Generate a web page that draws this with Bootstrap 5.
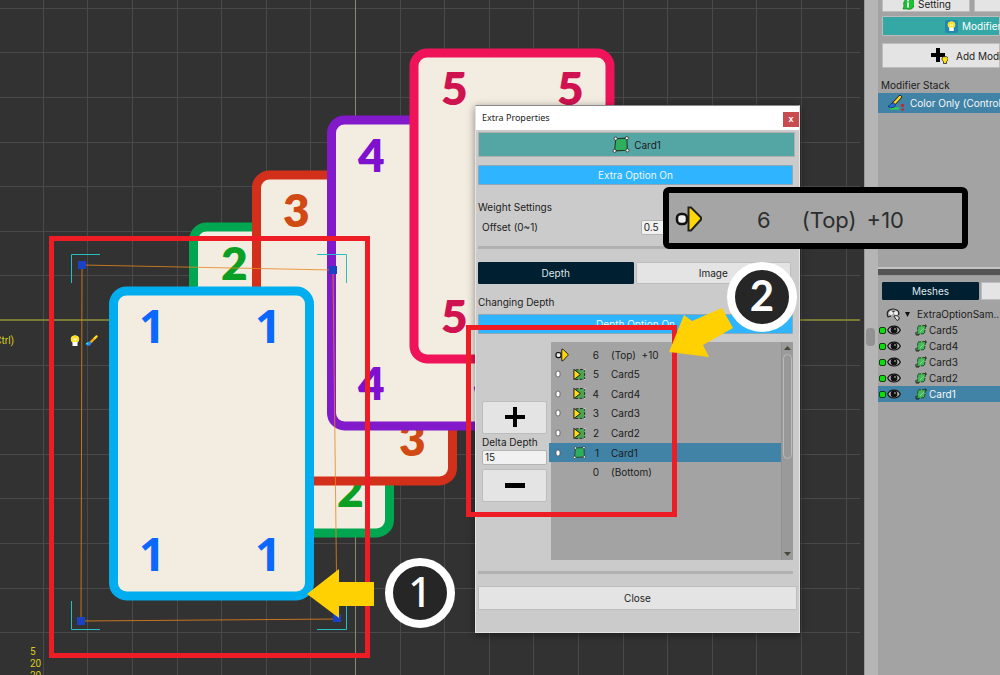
<!DOCTYPE html>
<html lang="en">
<head>
<meta charset="utf-8">
<meta name="viewport" content="width=device-width, initial-scale=1">
<title>Extra Properties</title>
<link href="https://cdn.jsdelivr.net/npm/bootstrap@5.3.0/dist/css/bootstrap.min.css" rel="stylesheet">
<script src="https://cdn.jsdelivr.net/npm/bootstrap@5.3.0/dist/js/bootstrap.bundle.min.js"></script>
<style>
  body { font-family: Inter, "Liberation Sans", sans-serif; font-size: 10px; line-height: 16px; color: #1c1c1c; background: #a3a3a3; }
  .stage { background: #323232; min-width: 0; }
  .stage-art, .notes { display: block; left: 0; top: 0; width: 100%; height: 100%; }
  .digit { font: 800 46px Lato, sans-serif; }
  .digit-one { font: 700 46px "Noto Sans", sans-serif; }
  .hud { font: 10px Roboto, sans-serif; fill: #d6ce1c; }
  .badge-one { font: 500 41px "Noto Sans", sans-serif; }
  .badge-two { font: 700 42px Lato, sans-serif; }

  /* shared controls */
  .ctl { border: 1px solid #bdbdbd; border-radius: 1px; background: #e4e4e4; color: #1c1c1c; font-size: 10px; line-height: 16px; padding: 0; white-space: nowrap; }
  .ctl-on { background: #001f30; color: #dfe6ea; border-color: #001f30; }
  .ctl-blue { background: #2fb4ff; color: #eef8ff; border-color: #8fa8b8; }
  .field { border: 1px solid #b4b4b4; border-radius: 2px; background: #f1f1f1; height: 15px; padding: 0 2px; font-size: 10px; line-height: 13px; color: #1c1c1c; }
  .picked { background: #4183a6; }
  .h20 { height: 20px; }
  .h22 { height: 22px; }

  /* floating window */
  .win { left: 475px; top: 105px; width: 325px; background: #cbcbcb; border: 1px solid #e4e4e4; border-top: 1px solid #8a8a8a; box-shadow: 0 2px 8px rgba(0,0,0,.45); }
  .win-title { height: 24px; background: #fff; font-family: "Noto Sans", sans-serif; font-size: 9px; padding-left: 6px; }
  .win-x { width: 16px; height: 15px; background: #c84b50; color: #fff; border: 0; padding: 0; font: bold 9px/13px "Liberation Sans", sans-serif; margin-top: 2px; }
  .win-head { height: 25px; background: #54a6a5; margin: 2px 4px 0 2px; border: 1px solid #b5b0ae; }
  .win-body { padding: 8px 2px 22px 2px; }
  .heading { margin: 14px 0 4px; }
  .offset-field { width: 49%; }
  .rule { height: 3px; background: #b1b1b1; margin: 11px 4px 0 0; }
  .tabs { gap: 2px; margin-top: 13px; padding-right: 6px; }
  .subheading { margin-top: 10px; }
  .side-col { width: 65px; }
  .big-btn { height: 33px; border-radius: 2px; }
  .layers { height: 218px; background: #a3a3a3; }
  .layer-list { display: grid; grid-template-rows: repeat(7, 1fr); height: 137px; margin: 3px 0 0 -2px; }
  .layer { display: grid; grid-template-columns: 18px 12px 18px auto; align-items: center; padding-left: 6px; }
  .layer:not(.picked) { margin-left: 2px; padding-left: 4px; }
  .track { width: 12px; background: #9a9a9a; border-left: 1px solid #929292; }
  .thumb { width: 9px; height: 105px; border: 1px solid #bababa; border-radius: 5px; background: #989898; }
  .tri { width: 7px; height: 4px; background: #484838; clip-path: polygon(50% 0, 100% 100%, 0 100%); }
  .tri-down { clip-path: polygon(0 0, 100% 0, 50% 100%); }
  .close-btn { height: 24px; margin-top: 12px; }

  /* right dock */
  .gutter { width: 14px; background: #b5b5b5; border-left: 1px solid #999; }
  .grip { width: 9px; height: 18px; border-radius: 4px; background: #929292; margin: 328px 0 0 1px; }
  .dock { width: 122px; background: #a3a3a3; white-space: nowrap; }
  .dock-top { height: 267px; }
  .top-tabs { height: 12px; }
  .top-tab { width: 88px; height: 17px; }
  .mod-head { height: 20px; background: #35a8a6; padding-left: 62px; }
  .add-mod { height: 25px; margin-top: 7px; padding-left: 48px; gap: 8px; }
  .stack-title { margin: 9px 0 0 -1px; }
  .stack-row { margin-left: -4px; padding-left: 9px; gap: 5px; }
  .dock-bar { height: 9px; background: #555; border-top: 2px solid #c4c4c4; border-bottom: 1px solid #999; }
  .mesh-tabs { gap: 2px; margin: 6px 0; }
  .mesh-tab { width: 97px; height: 18px; }
  .tree-row { height: 16px; }
  .caret { margin: 0 7px 0 4px; }
  .dot { width: 7px; height: 7px; background: #0be00b; border: 1px solid #123d12; border-radius: 2px; margin: 0 1px; }
  .tree-icon { margin: 0 2px 0 14px; }

  .zoom-note { left: 663px; top: 187px; width: 305px; height: 62px; border: 6px solid #000; border-radius: 6px; background: #a5a5a5; font-size: 22px; line-height: 26px; padding: 4px 0 0 6px; color: #2d2d2d; gap: 10px; }
  .zoom-note svg { margin-bottom: 3px; }
  .zoom-num { margin: 0 21px 0 44px; }
</style>
</head>
<body class="vh-100 d-flex overflow-hidden position-relative">

<svg width="0" height="0" class="position-absolute" aria-hidden="true">
  <symbol id="mesh" viewBox="0 0 16 16">
    <path d="M3 2.500 13.500 2 14 13.500 2 14Z" fill="#2fae5e" stroke="#1d3b22"/>
    <g fill="#f4f4f4" stroke="#222" stroke-width=".7"><circle cx="3" cy="2.500" r="1.500"/><circle cx="13.500" cy="2" r="1.500"/><circle cx="14" cy="13.500" r="1.500"/><circle cx="2" cy="14" r="1.500"/></g>
  </symbol>
  <symbol id="mesh-up" viewBox="0 0 14 13">
    <path d="M3 1.500 12.500 1 12.500 11.500 2 12Z" fill="#4aa552" stroke="#222" stroke-dasharray="3 1.500"/>
    <path d="M1 1v11l7-5.500Z" fill="#ffd91c" stroke="#111"/>
    <path d="M12 1h1v1M12 12h1" stroke="#eee" fill="none"/>
  </symbol>
  <symbol id="mesh-sm" viewBox="0 0 12 12">
    <path d="M3 2 10.500 1.500 9.500 9.500 2 10.500Z" fill="#46b95a" stroke="#1c4a24" stroke-dasharray="3 1"/>
    <path d="M5 8l4-4" stroke="#a5e0ad" stroke-width=".7" fill="none"/>
    <path d="M1 8v3h3M10 1h1v2" stroke="#222" fill="none"/>
  </symbol>
  <symbol id="insert" viewBox="0 0 28 28">
    <rect x="2" y="9" width="10" height="10" rx="4" fill="#eee" stroke="#111" stroke-width="2.500"/>
    <path d="M13.500 2.500h2.500L26 12.500v2L16 25.500h-2.500Z" fill="#ffd60a" stroke="#222" stroke-width="2"/>
  </symbol>
  <symbol id="peg" viewBox="0 0 6 8"><rect x="1" y="1" width="4" height="6" rx="2" fill="#fff" stroke="#555" stroke-width=".8"/></symbol>
  <symbol id="eye" viewBox="0 0 14 10">
    <path d="M.7 5C3-.3 11-.3 13.300 5 11 10.300 3 10.300.7 5Z" fill="#b9b9b9" stroke="#111" stroke-width="1.200"/>
    <circle cx="7" cy="5" r="3.400" fill="#111"/><circle cx="8" cy="4" r=".8" fill="#ddd"/>
  </symbol>
  <symbol id="brush" viewBox="0 0 14 12">
    <path d="M12.500 1 6 7.500" stroke="#f2a916" stroke-width="2.600" stroke-linecap="round"/>
    <path d="M12.700.8 10 3.500" stroke="#ffe52e" stroke-width="2"/>
    <path d="M1 9c2 0 2-2.500 4-2.500S7.500 9 5.500 10.500 1.500 11 1 9Z" fill="#2a86e8"/>
    <path d="M1 9c1 0 2-1 2.500-1.500" stroke="#2be0d0" stroke-width="1.500" fill="none"/>
  </symbol>
  <symbol id="brush-dark" viewBox="0 0 18 16">
    <path d="M3 13.500h9" stroke="#2fd24c" stroke-width="2"/>
    <path d="M13 2 6.500 9" stroke="#222" stroke-width="4" stroke-linecap="round"/>
    <path d="M13 2 7.500 8" stroke="#ffd71e" stroke-width="2.400" stroke-linecap="round"/>
    <path d="M1 11c3 0 2-3 5-3s3 4 0 4.500S2 12.500 1 11Z" fill="#1f6fe0" stroke="#123" stroke-width=".6"/>
    <path d="M15.500 9v3M15.500 13.500v2" stroke="#d02020" stroke-width="2.400"/>
  </symbol>
  <symbol id="bulb" viewBox="0 0 10 12">
    <path d="M5 .5c5 0 5 5 2.500 7v3.500h-5V7.500C0 5.500 0 .5 5 .5Z" fill="#fff"/>
    <path d="M5 .5c5 0 5 5 2.500 6.500h-5C0 5.500 0 .5 5 .5Z" fill="#ffe11a"/>
    <path d="M4 3v3M6 3v3M4 4.500h2" stroke="#fff" stroke-width=".8"/>
  </symbol>
</svg>

<main class="stage flex-grow-1 position-relative overflow-hidden">
  <svg class="stage-art position-absolute" aria-label="Canvas with five cards">
    <g id="grid" stroke="#494949" stroke-width="1"></g>
    <path d="M0 320h860" stroke="#7a7936" stroke-width="2"/>
    <path d="M355.500 0v675" stroke="#8b8a6c" stroke-width="1"/>
    <g fill="#f3ece0" stroke-width="9">
      <rect x="193.500" y="227" width="196" height="306" rx="13" stroke="#00a750"/>
      <g class="digit" fill="#0ba023" stroke="none"><text x="221" y="280">2</text><text x="337" y="507">2</text></g>
      <rect x="256.500" y="175" width="196" height="306" rx="13" stroke="#d3301b"/>
      <g class="digit" fill="#d14a14" stroke="none"><text x="283" y="227">3</text><text x="399" y="456">3</text></g>
      <rect x="331.500" y="120" width="196" height="306" rx="13" stroke="#8219cb"/>
      <g class="digit" fill="#8010d0" stroke="none"><text x="358" y="172">4</text><text x="358" y="400">4</text><text x="474" y="400">4</text></g>
      <rect x="414" y="53" width="196" height="306" rx="13" stroke="#ef145a"/>
      <g class="digit" fill="#cf1350" stroke="none"><text x="441" y="105">5</text><text x="557" y="105">5</text><text x="441" y="333">5</text></g>
      <rect x="113.500" y="291" width="196" height="305" rx="13" stroke="#00adee"/>
      <g class="digit-one" fill="#0a68ff" stroke="none"><text x="139" y="343">1</text><text x="255" y="343">1</text><text x="139" y="571">1</text><text x="255" y="571">1</text></g>
    </g>
    <path d="M82 265 333 270 337 619 81 621Z" fill="none" stroke="#e8861e" stroke-opacity=".8"/>
    <g fill="#1a42c4"><path d="M78 261h8v8h-8zM329 266h8v8h-8zM333 614h8v8h-8zM77 617h8v8h-8z"/></g>
    <g fill="none" stroke="#25bfc4"><path d="M100 254.500H71.500V283M317 254.500H346.500V283M71.500 601V629.500H100M317 629.500H346.500V601"/></g>
    <use href="#bulb" x="70" y="335" width="10" height="12"/>
    <use href="#brush" x="85" y="335" width="13" height="12"/>
    <g class="hud"><text x="-5" y="344">Ctrl)</text><text x="30" y="655">5</text><text x="30" y="667">20</text><text x="30" y="679">20</text></g>
  </svg>

  <section class="win position-absolute" aria-label="Extra Properties">
    <div class="win-title d-flex align-items-center justify-content-between">
      <span>Extra Properties</span><button class="win-x" aria-label="Close window">x</button>
    </div>
    <div class="win-head d-flex align-items-center justify-content-center">
      <svg width="18" height="17" class="me-1"><use href="#mesh"/></svg><span>Card1</span>
    </div>
    <div class="win-body">
      <div class="pe-1"><button class="ctl ctl-blue w-100 h20 d-block">Extra Option On</button></div>
      <div class="heading">Weight Settings</div>
      <div class="d-flex align-items-center">
        <label for="offset" class="flex-grow-1 ps-1">Offset (0~1)</label>
        <input id="offset" class="field offset-field" value="0.5">
      </div>
      <div class="rule"></div>
      <div class="d-flex tabs">
        <button class="ctl ctl-on h22 w-50">Depth</button><button class="ctl h22 w-50">Image</button>
      </div>
      <div class="subheading">Changing Depth</div>
      <div class="pe-1 mt-1"><button class="ctl ctl-blue w-100 h20 d-block">Depth Option On</button></div>
      <div class="d-flex mt-2 pe-1">
        <div class="side-col d-flex flex-column justify-content-center ms-1 me-1">
          <button class="ctl big-btn" aria-label="Increase depth"><svg width="20" height="20"><path d="M8 0h4v8h8v4h-8v8H8v-8H0V8h8z"/></svg></button>
          <label for="delta">Delta Depth</label>
          <input id="delta" class="field w-100" value="15">
          <button class="ctl big-btn mt-1" aria-label="Decrease depth"><svg width="20" height="20"><path d="M0 8h20v5H0z"/></svg></button>
        </div>
        <div class="layers d-flex flex-grow-1">
          <div class="layer-list flex-grow-1">
            <div class="layer"><svg width="14" height="14"><use href="#insert"/></svg><span></span><span class="text-end pe-1">6</span><span class="ps-2">(Top)&nbsp; +10</span></div>
            <div class="layer"><svg width="6" height="8"><use href="#peg"/></svg><svg width="13" height="13"><use href="#mesh-up"/></svg><span class="text-end pe-1">5</span><span class="ps-2">Card5</span></div>
            <div class="layer"><svg width="6" height="8"><use href="#peg"/></svg><svg width="13" height="13"><use href="#mesh-up"/></svg><span class="text-end pe-1">4</span><span class="ps-2">Card4</span></div>
            <div class="layer"><svg width="6" height="8"><use href="#peg"/></svg><svg width="13" height="13"><use href="#mesh-up"/></svg><span class="text-end pe-1">3</span><span class="ps-2">Card3</span></div>
            <div class="layer"><svg width="6" height="8"><use href="#peg"/></svg><svg width="13" height="13"><use href="#mesh-up"/></svg><span class="text-end pe-1">2</span><span class="ps-2">Card2</span></div>
            <div class="layer picked"><svg width="6" height="8"><use href="#peg"/></svg><svg width="13" height="13"><use href="#mesh"/></svg><span class="text-end pe-1">1</span><span class="ps-2">Card1</span></div>
            <div class="layer"><span></span><span></span><span class="text-end pe-1">0</span><span class="ps-2">(Bottom)</span></div>
          </div>
          <div class="track d-flex flex-column align-items-center py-1">
            <div class="tri"></div><div class="thumb mt-1"></div><div class="tri tri-down mt-auto"></div>
          </div>
        </div>
      </div>
      <div class="rule"></div>
      <button class="ctl w-100 d-block close-btn">Close</button>
    </div>
  </section>
</main>

<div class="gutter flex-shrink-0"><div class="grip"></div></div>

<aside class="dock flex-shrink-0 overflow-hidden">
  <div class="dock-top overflow-hidden ps-1">
    <div class="d-flex gap-1 align-items-end top-tabs">
      <button class="ctl top-tab flex-shrink-0 d-flex align-items-center justify-content-center">
        <svg width="13" height="13" class="me-1"><path d="M2 12 3 9a5.500 5.500 0 1 1 3 3Z" fill="#19c22e" stroke="#0b6e1a" stroke-width=".6"/><path d="M7 2.500v2M7 5.500v5" stroke="#fff" stroke-width="1.800"/></svg>Setting</button>
      <button class="ctl top-tab flex-shrink-0" aria-label="Bone"></button>
    </div>
    <button class="ctl mod-head d-flex align-items-center w-100 text-white mt-1">
      <svg width="13" height="13" class="me-1 flex-shrink-0"><rect width="13" height="13" rx="2" fill="#2388ac"/><use href="#bulb" x="2" y="1" width="9" height="11"/></svg>Modifier</button>
    <button class="ctl add-mod d-flex align-items-center w-100">
      <svg width="17" height="18" class="flex-shrink-0"><path d="M5 1h4v5h5v4H9v5H5v-5H0V6h5z"/><path d="M14 9.500c4 0 3.500 4 1.500 5v2h-3v-2c-2-1-2.500-5 1.500-5Z" fill="#ffe11a" stroke="#222" stroke-width=".8"/></svg>Add Modifier</button>
    <div class="stack-title">Modifier Stack</div>
    <div class="picked stack-row d-flex align-items-center text-light h20">
      <svg width="18" height="16" class="flex-shrink-0"><use href="#brush-dark"/></svg>Color Only (Controller)</div>
  </div>
  <div class="dock-bar"></div>
  <div class="d-flex ps-1 mesh-tabs">
    <button class="ctl ctl-on mesh-tab flex-shrink-0">Meshes</button>
    <button class="ctl mesh-tab flex-shrink-0" aria-label="Bones"></button>
  </div>
  <div class="tree-row d-flex align-items-center ps-2">
    <svg width="15" height="13" class="flex-shrink-0"><path d="M2 9C-.5 3 4 1 7 1s7 2 5.500 6M2 9l3-1M4 5c2-2 5-2 7 0" fill="none" stroke="#222" stroke-width="1.200"/><circle cx="5" cy="5" r="2" fill="#eee"/><circle cx="10" cy="5" r="2" fill="#eee"/><path d="M8 8c2-1 6 0 5 3s-3 1-5-3Z" fill="#ddd" stroke="#222"/></svg>
    <svg width="5" height="5" class="flex-shrink-0 caret"><path d="M0 0h5L2.500 5z" fill="#111"/></svg>ExtraOptionSam..
  </div>
  <div id="tree"></div>
</aside>

<div class="zoom-note position-absolute d-flex align-items-center">
  <svg width="28" height="28"><use href="#insert"/></svg><span class="zoom-num">6</span><span>(Top)</span><span>+10</span>
</div>

<svg class="notes position-absolute pe-none" aria-hidden="true">
  <g fill="none" stroke="#ee1c24" stroke-width="5"><rect x="51.500" y="238.500" width="316" height="417"/><rect x="468.500" y="327.500" width="206" height="187"/></g>
  <g fill="#ffd103"><path d="M307 594 339 569V582H374V606H339V618Z"/><path d="M669 352 684 315 692 321 722 308 733 328 703 345 709 357Z"/></g>
  <g fill="#262626" stroke="#fff" stroke-width="8"><circle cx="420" cy="593" r="31"/><circle cx="762" cy="297" r="31"/></g>
  <g fill="#fff" text-anchor="middle"><text x="420" y="607" class="badge-one">1</text><text x="762" y="311" class="badge-two">2</text></g>
</svg>

<script>
  // canvas grid, counted outwards from the two axes
  let d = '';
  for (let k = -8; k < 12; k++) d += `M${356 + Math.round(k * 44.6) - .5} 0V675`;
  for (let k = -7; k < 9; k++) d += `M0 ${320 + Math.round(k * 44.6) + .5}H860`;
  document.getElementById('grid').innerHTML = `<path d="${d}"/>`;
  document.getElementById('tree').innerHTML = [5, 4, 3, 2, 1].map(n =>
    `<div class="tree-row d-flex align-items-center ${n === 1 ? 'picked text-light' : ''}"><span class="dot flex-shrink-0"></span>
     <svg width="14" height="10" class="flex-shrink-0"><use href="#eye"/></svg>
     <svg width="12" height="12" class="flex-shrink-0 tree-icon"><use href="#mesh-sm"/></svg>Card${n}</div>`).join('');
</script>
</body>
</html>
